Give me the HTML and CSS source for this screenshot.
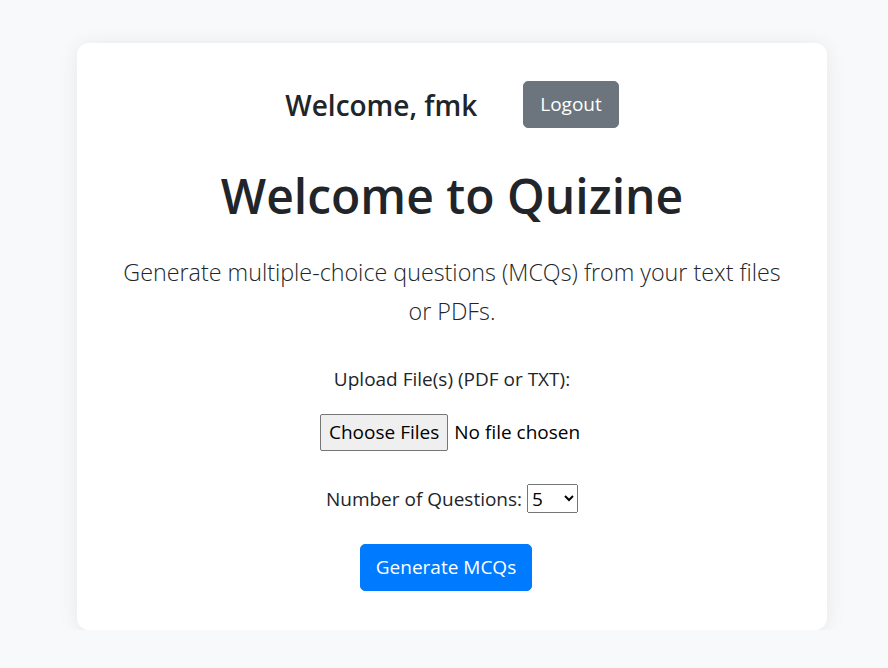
FILE: index.html
```html
<!DOCTYPE html>
<html lang="en">
<head>
<meta charset="utf-8">
<title>Quizine</title>
<link rel="stylesheet" href="styles.css">
</head>
<body>
<main class="card">
  <div class="topbar">
    <h3 class="greeting">Welcome, fmk</h3>
    <button class="btn btn-secondary">Logout</button>
  </div>
  <h1 class="title">Welcome to Quizine</h1>
  <p class="lead">Generate multiple-choice questions (MCQs) from your text files or PDFs.</p>
  <form class="form">
    <label class="label" for="files">Upload File(s) (PDF or TXT):</label>
    <input class="file" id="files" type="file" multiple>
    <div class="count-row">
      <label class="label" for="count">Number of Questions:</label>
      <select class="select" id="count">
        <option>5</option>
        <option>10</option>
        <option>15</option>
      </select>
    </div>
    <button type="button" class="btn btn-primary btn-generate">Generate MCQs</button>
  </form>
</main>
</body>
</html>
```

FILE: styles.css
```css
html, body {
  margin: 0;
  padding: 0;
}
body {
  background: #f8f9fa;
  font-family: "Open Sans", "Noto Sans", sans-serif;
  color: #212529;
}
.card {
  box-sizing: border-box;
  width: 750px;
  margin: 43px 0 0 77px;
  padding: 38px 40px 39px;
  background: #fff;
  border-radius: 12px;
  box-shadow: 0 2px 20px rgba(0, 0, 0, 0.08);
  text-align: center;
}
.topbar {
  display: flex;
  justify-content: center;
  align-items: center;
  gap: 46px;
}
.greeting {
  margin: 0;
  font-size: 28px;
  font-weight: 600;
}
.btn {
  font-family: inherit;
  font-size: 19px;
  line-height: 29px;
  padding: 8px 16px;
  border: 1px solid transparent;
  border-radius: 5px;
  color: #fff;
  cursor: pointer;
}
.btn-secondary {
  background: #6c757d;
  border-color: #6c757d;
}
.btn-primary {
  background: #007bff;
  border-color: #007bff;
}
.title {
  margin: 36px 0 0;
  font-size: 48px;
  line-height: 64px;
  font-weight: 600;
}
.lead {
  margin: 25px 0 0;
  font-size: 23.3px;
  line-height: 39px;
  font-weight: 300;
}
.form {
  margin-top: 35px;
  display: flex;
  flex-direction: column;
  align-items: center;
}
.label {
  font-size: 19px;
  line-height: 26px;
}
.file {
  margin-top: 22px;
  width: 264px;
  font-family: inherit;
  font-size: 19px;
  color: #000;
}
.file::file-selector-button {
  font-family: inherit;
  font-size: 19px;
  line-height: 25px;
  padding: 5px 8px;
  margin-right: 6px;
  color: #000;
  background: #efefef;
  border: 1px solid #767676;
  border-radius: 2px;
}
.count-row {
  margin-top: 33px;
  display: flex;
  align-items: center;
  gap: 5px;
}
.select {
  font-family: inherit;
  font-size: 19px;
  height: 29px;
  width: 51px;
  color: #000;
}
.btn-generate {
  margin-top: 31px;
  margin-right: 12px;
  padding-left: 15px;
  padding-right: 15px;
}
```
